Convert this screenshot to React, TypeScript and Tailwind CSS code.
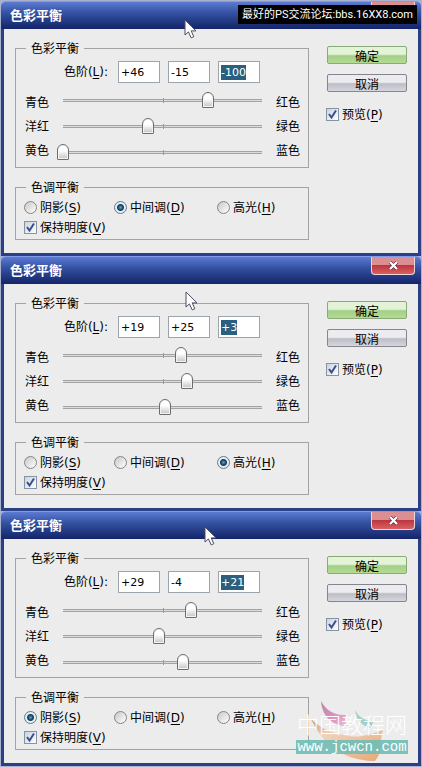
import React from 'react';
import clsx from 'clsx';

type Tone = 'shadows' | 'midtones' | 'highlights';

interface DialogProps {
  id: string;
  initialLevels: number[];
  initialTone: Tone;
}

const sliders = [
  { left: '青色', right: '红色' },
  { left: '洋红', right: '绿色' },
  { left: '黄色', right: '蓝色' },
];

const tones: { key: Tone; label: string; hotkey: string }[] = [
  { key: 'shadows', label: '阴影', hotkey: 'S' },
  { key: 'midtones', label: '中间调', hotkey: 'D' },
  { key: 'highlights', label: '高光', hotkey: 'H' },
];

const format = (value: number) => (value > 0 ? `+${value}` : `${value}`);

function Cursor({ className }: { className: string }) {
  return (
    <svg className={clsx('absolute z-10 pointer-events-none', className)} width="14" height="20" viewBox="0 0 14 20">
      <path
        d="M1 1 V16 L4.4 12.9 L7.2 18.9 L9.8 17.7 L7.2 11.9 H12 Z"
        fill="#fff"
        stroke="#4b4f60"
        strokeWidth="1"
      />
    </svg>
  );
}

function Checkbox({ label, hotkey }: { label: string; hotkey: string }) {
  return (
    <label className="flex h-5 items-center gap-[3px] whitespace-nowrap">
      <span className="relative flex h-[13px] w-[13px] shrink-0">
        <input
          type="checkbox"
          defaultChecked
          className="peer h-[13px] w-[13px] appearance-none border border-[#8594a5] bg-linear-to-br from-[#c9d3de] to-white"
        />
        <svg className="pointer-events-none absolute inset-0 hidden peer-checked:block" width="13" height="13" viewBox="0 0 13 13">
          <path d="M3 6 L5.5 9.5 L10 2.5" fill="none" stroke="#3c4f8c" strokeWidth="2" />
        </svg>
      </span>
      <span className="pt-0.5">
        {label}(<u className="underline-offset-2">{hotkey}</u>)
      </span>
    </label>
  );
}

function LevelSlider({ value, label, onChange }: { value: number; label: string; onChange: (value: number) => void }) {
  return (
    <div className="relative flex h-[26px] items-center">
      <div className="absolute inset-x-1.5 h-[3px] border-y border-[#a3a3a3] bg-[#dcdcdc]" />
      <div className="absolute left-1/2 h-[5px] w-px bg-[#999]" />
      <input
        type="range"
        min={-100}
        max={100}
        value={value}
        aria-label={label}
        onChange={(e) => onChange(Number(e.target.value))}
        className="relative h-4 w-full appearance-none bg-transparent [&::-webkit-slider-thumb]:h-4 [&::-webkit-slider-thumb]:w-3 [&::-webkit-slider-thumb]:appearance-none [&::-webkit-slider-thumb]:rounded-t-[6px] [&::-webkit-slider-thumb]:rounded-b-[1px] [&::-webkit-slider-thumb]:border [&::-webkit-slider-thumb]:border-[#6d6d6d] [&::-webkit-slider-thumb]:bg-linear-to-b [&::-webkit-slider-thumb]:from-white [&::-webkit-slider-thumb]:from-40% [&::-webkit-slider-thumb]:to-[#c4c4c4] [&::-webkit-slider-thumb]:shadow-[inset_0_0_0_1px_#f4f4f4]"
      />
    </div>
  );
}

function ColorBalanceDialog({ id, initialLevels, initialTone }: DialogProps) {
  const [levels, setLevels] = React.useState(initialLevels);
  const [tone, setTone] = React.useState<Tone>(initialTone);

  const setLevel = (index: number, value: number) => {
    if (Number.isNaN(value)) return;
    setLevels(levels.map((level, i) => (i === index ? value : level)));
  };

  return (
    <section>
      {/* Title bar */}
      <header className="flex h-7 items-start justify-between rounded-t-[5px] border-t border-[#7f9bea] bg-linear-to-b from-[#5c7bd2] via-[#3452a2] via-40% to-[#142468] pl-[9px] pr-1.5">
        <h2 className="pt-1 text-[13px] leading-5 font-bold text-white">色彩平衡</h2>
        <button
          aria-label="关闭"
          className="flex h-[18px] w-11 items-center justify-center rounded-b-[4px] border border-t-0 border-[#f0d4dc] bg-linear-to-b from-[#dc8f93] from-45% via-[#bd3540] via-50% to-[#d8615f]"
        >
          <svg width="11" height="9" viewBox="0 0 11 9">
            <path d="M2 1 L9 8 M9 1 L2 8" stroke="#6d3040" strokeWidth="3.6" />
            <path d="M2 1 L9 8 M9 1 L2 8" stroke="#fff" strokeWidth="2.2" />
          </svg>
        </button>
      </header>

      <div className="flex gap-[18px] border-x-[3px] border-b-[3px] border-[#2c3f85] bg-[#ececec] px-[11px] pt-[11px] pb-[13px]">
        <div className="flex min-w-0 flex-1 flex-col gap-[11px]">
          <fieldset className="min-w-0 border border-[#a3a3a3] pb-0.5">
            <legend className="ml-[10px] h-4 px-[5px] leading-[18px]">色彩平衡</legend>
            <div className="flex items-center justify-end gap-[10px] pt-[5px] pr-12">
              <label htmlFor={`${id}-level-0`} className="whitespace-nowrap">
                色阶(<u className="underline-offset-2">L</u>):
              </label>
              <div className="flex gap-2">
                {levels.map((level, i) => (
                  <div key={i} className="flex h-[22px] w-[42px] items-center border border-[#9ba3ad] bg-white pl-0.5">
                    <input
                      id={`${id}-level-${i}`}
                      type="text"
                      aria-label={i > 0 ? `色阶 ${i + 1}` : undefined}
                      value={format(level)}
                      onChange={(e) => setLevel(i, Number(e.target.value))}
                      className={clsx(
                        'h-[15px] field-sizing-content text-[11px] leading-[15px] outline-none',
                        i === 2 && 'bg-[#2a5f7d] text-white'
                      )}
                    />
                  </div>
                ))}
              </div>
            </div>

            <div className="mt-1 flex items-center gap-2 pr-2 pl-[9px]">
              <div className="shrink-0">
                {sliders.map((s) => (
                  <div key={s.left} className="h-6 leading-[26px]">{s.left}</div>
                ))}
              </div>
              <div className="min-w-0 flex-1">
                {sliders.map((s, i) => (
                  <LevelSlider
                    key={s.left}
                    label={`${s.left} / ${s.right}`}
                    value={levels[i]}
                    onChange={(value) => setLevel(i, value)}
                  />
                ))}
              </div>
              <div className="shrink-0">
                {sliders.map((s) => (
                  <div key={s.right} className="h-6 leading-[26px]">{s.right}</div>
                ))}
              </div>
            </div>
          </fieldset>

          <fieldset className="min-w-0 border border-[#a3a3a3] pt-0.5 pb-0.5 pl-2">
            <legend className="ml-0.5 h-4 px-[5px] leading-[18px]">色调平衡</legend>
            <div className="grid grid-cols-[90px_103px_1fr]">
              {tones.map((item) => (
                <label key={item.key} className="flex h-5 items-center gap-[3px] whitespace-nowrap">
                  <input
                    type="radio"
                    name={`${id}-tone`}
                    checked={tone === item.key}
                    onChange={() => setTone(item.key)}
                    className={clsx(
                      'h-[13px] w-[13px] shrink-0 appearance-none rounded-full border',
                      tone === item.key
                        ? 'border-[#5f7a90] bg-[radial-gradient(circle_at_50%_50%,#6fa6c4_0,#1f5478_2px,#173f5e_3px,#e4eef4_4px)]'
                        : 'border-[#858585] bg-linear-to-br from-[#c8c8c8] to-white'
                    )}
                  />
                  <span className="pt-0.5">
                    {item.label}(<u className="underline-offset-2">{item.hotkey}</u>)
                  </span>
                </label>
              ))}
            </div>
            <Checkbox label="保持明度" hotkey="V" />
          </fieldset>
        </div>

        <div className="flex w-20 shrink-0 flex-col pt-1.5">
          <button className="h-[18px] rounded-[2px] border border-[#8aa878] bg-linear-to-b from-[#e2f3d6] from-45% via-[#a4cf88] via-55% to-[#b2dc92] pt-0.5 leading-4">
            确定
          </button>
          <button className="mt-[10px] h-[18px] rounded-[2px] border border-[#85858f] bg-linear-to-b from-[#ececf0] from-45% via-[#bdbdc6] via-55% to-[#d6d6de] pt-0.5 leading-4">
            取消
          </button>
          <div className="mt-3 -ml-px">
            <Checkbox label="预览" hotkey="P" />
          </div>
        </div>
      </div>
    </section>
  );
}

function Watermark() {
  return (
    <div className="pointer-events-none absolute right-[14px] bottom-[13px] w-28">
      <svg className="absolute -top-[14px] left-[14px]" width="82" height="66" viewBox="0 0 82 66">
        <defs>
          <linearGradient id="petal" x1="0" y1="0" x2="1" y2="1">
            <stop offset="0" stopColor="#b98a9c" />
            <stop offset="0.5" stopColor="#da8fbe" />
            <stop offset="1" stopColor="#e9c3d9" />
          </linearGradient>
          <linearGradient id="bowl" x1="0" y1="0" x2="1" y2="1">
            <stop offset="0" stopColor="#c99a86" />
            <stop offset="0.3" stopColor="#f0d2ba" />
            <stop offset="1" stopColor="#e6a878" />
          </linearGradient>
        </defs>
        <path d="M11 3 C16 12 24 18 37 17 C33 21 35 26 39 28 C25 29 12 20 11 3 Z" fill="url(#petal)" />
        <path d="M45 12 C49 20 55 22 63 24 L61 30 C52 28 46 22 45 12 Z" fill="#9fd0ca" />
        <path d="M1 21 C12 32 24 35 39 38 C51 40 62 36 73 32 C69 43 74 53 65 63 C45 63 17 56 1 21 Z" fill="url(#bowl)" />
      </svg>
      <p className="relative text-center text-[22px] leading-7 font-light whitespace-nowrap text-white">中国教程网</p>
      <p className="relative bg-[#70beb6]/90 text-center font-['Liberation_Mono',monospace] text-[14px] leading-[14px] text-white">
        www.jcwcn.com
      </p>
    </div>
  );
}

export default function App() {
  return (
    <main className="relative bg-[#a9b2cf] p-px font-['DejaVu_Sans','Noto_Sans_CJK_SC',sans-serif] text-xs leading-4 text-black">
      <ColorBalanceDialog id="first" initialLevels={[46, -15, -100]} initialTone="midtones" />
      <ColorBalanceDialog id="second" initialLevels={[19, 25, 3]} initialTone="highlights" />
      <ColorBalanceDialog id="third" initialLevels={[29, -4, 21]} initialTone="shadows" />

      <p className="absolute top-[5px] right-[5px] bg-black px-1 font-['Roboto','Noto_Sans_CJK_SC',sans-serif] text-[11px] leading-[19px] whitespace-nowrap text-white">
        最好的PS交流论坛:bbs.16XX8.com
      </p>
      <Cursor className="top-[19px] left-[184px]" />
      <Cursor className="top-[291px] left-[185px]" />
      <Cursor className="top-[526px] left-[204px]" />
      <Watermark />
    </main>
  );
}
